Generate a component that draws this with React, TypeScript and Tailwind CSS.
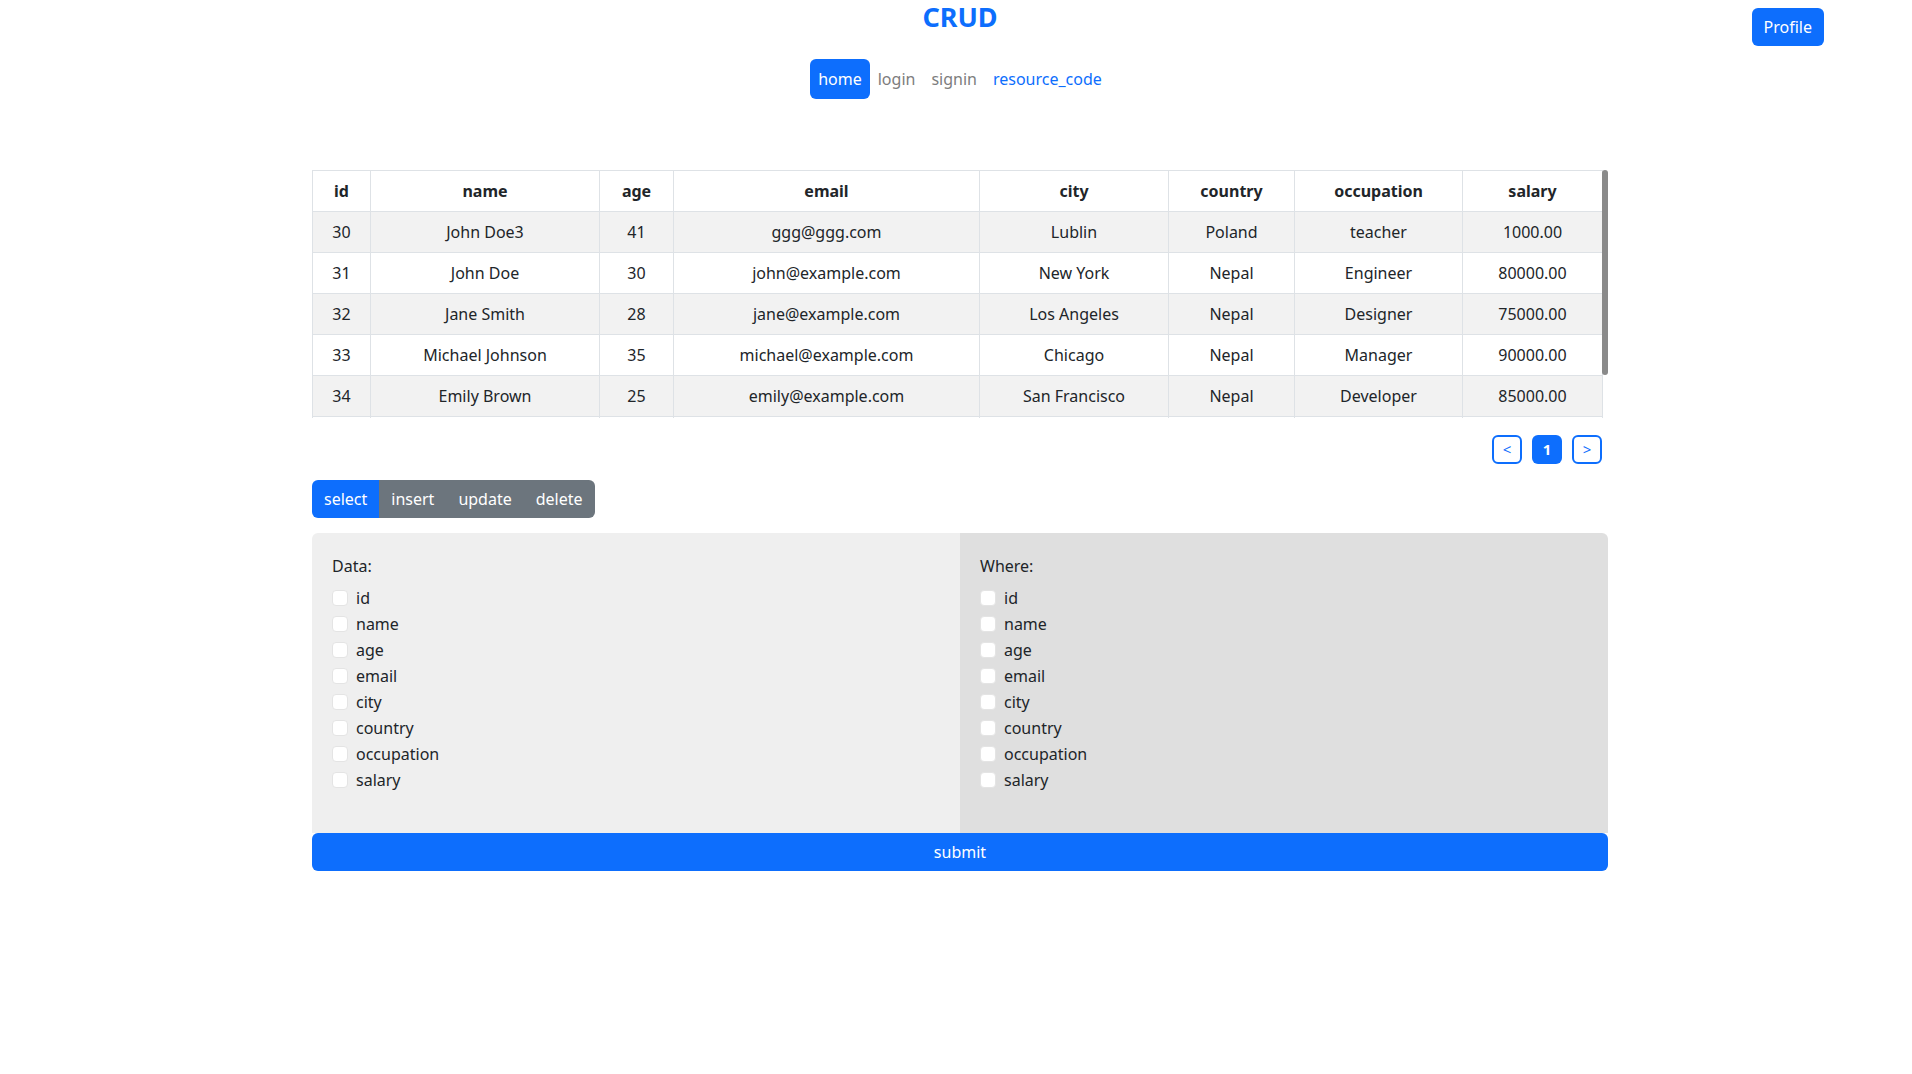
import { useState } from 'react';

const COLUMNS = [
  { key: 'id', w: 'w-[58px]' },
  { key: 'name', w: 'w-[229px]' },
  { key: 'age', w: 'w-[74px]' },
  { key: 'email', w: 'w-[306px]' },
  { key: 'city', w: 'w-[189px]' },
  { key: 'country', w: 'w-[126px]' },
  { key: 'occupation', w: 'w-[168px]' },
  { key: 'salary', w: 'w-[140px]' },
];

const ROWS = [
  [30, 'John Doe3', 41, 'ggg@ggg.com', 'Lublin', 'Poland', 'teacher', '1000.00'],
  [31, 'John Doe', 30, 'john@example.com', 'New York', 'Nepal', 'Engineer', '80000.00'],
  [32, 'Jane Smith', 28, 'jane@example.com', 'Los Angeles', 'Nepal', 'Designer', '75000.00'],
  [33, 'Michael Johnson', 35, 'michael@example.com', 'Chicago', 'Nepal', 'Manager', '90000.00'],
  [34, 'Emily Brown', 25, 'emily@example.com', 'San Francisco', 'Nepal', 'Developer', '85000.00'],
  [35, 'David Wilson', 32, 'david@example.com', 'Seattle', 'Nepal', 'Analyst', '70000.00'],
];

const FIELDS = ['id', 'name', 'age', 'email', 'city', 'country', 'occupation', 'salary'];

function FieldList({ title, bg, rounded }: { title: string; bg: string; rounded: string }) {
  return (
    <div className={`${bg} ${rounded} pt-[21px] px-5`}>
      <div className="mb-2 leading-6 text-[#212529]">{title}</div>
      {FIELDS.map((f) => (
        <label key={f} className="flex items-start mb-[2px] leading-6 text-[#212529]">
          <input
            type="checkbox"
            className="appearance-none mt-1 w-4 h-4 shrink-0 bg-white border border-[#e4e4e4] rounded"
          />
          <span className="ml-[8px]">{f}</span>
        </label>
      ))}
    </div>
  );
}

export default function App() {
  const [mode, setMode] = useState('select');

  return (
    <div className="relative min-h-screen bg-white text-base text-[#212529] font-['Noto_Sans',sans-serif]">
      <button className="absolute top-2 right-[88px] h-[38px] px-3 rounded-md bg-[#0d6efd] text-white leading-6">
        Profile
      </button>

      <div className="ml-[312px] w-[1296px]">
        <h1 className="text-center text-[27px] leading-[34px] font-bold text-[#0d6efd]">CRUD</h1>

        <nav className="mt-[25px] flex justify-center">
          <a className="px-2 py-2 leading-6 rounded-md bg-[#0d6efd] text-white">home</a>
          <a className="px-2 py-2 leading-6 text-[#7d7d7d]">login</a>
          <a className="px-2 py-2 leading-6 text-[#7d7d7d]">signin</a>
          <a className="px-2 py-2 leading-6 text-[#0d6efd]">resource_code</a>
        </nav>

        <div className="relative mt-[71px]">
          <div className="h-[248px] overflow-y-auto [&::-webkit-scrollbar]:w-0">
            <table className="w-[1290px] table-fixed border-collapse mb-4 text-center">
              <thead>
                <tr>
                  {COLUMNS.map((c) => (
                    <th key={c.key} className={`${c.w} border border-[#dee2e6] py-2 leading-6 font-bold`}>
                      {c.key}
                    </th>
                  ))}
                </tr>
              </thead>
              <tbody>
                {ROWS.map((r, i) => (
                  <tr key={r[0]} className={i % 2 === 0 ? 'bg-[#f2f2f2]' : 'bg-white'}>
                    {r.map((v, j) => (
                      <td key={j} className="border border-[#dee2e6] py-2 leading-6">
                        {v}
                      </td>
                    ))}
                  </tr>
                ))}
              </tbody>
            </table>
          </div>
          {/* scrollbar thumb */}
          <div className="absolute top-0 right-0 w-[6px] h-[205px] rounded-full bg-[#8a8a8a]" />
        </div>

        <div className="mt-[17px] pr-[6px] flex justify-end gap-[10px]">
          <button className="w-[30px] h-[29px] border-2 border-[#0d6efd] rounded-md text-[#0d6efd] text-[15px] leading-none">&lt;</button>
          <button className="w-[30px] h-[29px] rounded-md bg-[#0d6efd] text-white text-[15px] font-bold leading-none">1</button>
          <button className="w-[30px] h-[29px] border-2 border-[#0d6efd] rounded-md text-[#0d6efd] text-[15px] leading-none">&gt;</button>
        </div>

        <div className="mt-4 inline-flex rounded-md overflow-hidden">
          {['select', 'insert', 'update', 'delete'].map((m) => (
            <button
              key={m}
              onClick={() => setMode(m)}
              className={`h-[38px] px-3 leading-6 text-white ${mode === m ? 'bg-[#0d6efd]' : 'bg-[#6c757d]'}`}
            >
              {m}
            </button>
          ))}
        </div>

        <div className="mt-[15px] grid grid-cols-2 h-[300px]">
          <FieldList title="Data:" bg="bg-[#efefef]" rounded="rounded-tl-md" />
          <FieldList title="Where:" bg="bg-[#dfdfdf]" rounded="rounded-tr-md" />
        </div>

        <button className="w-full h-[38px] rounded-md bg-[#0d6efd] text-white leading-6">submit</button>
      </div>
    </div>
  );
}
